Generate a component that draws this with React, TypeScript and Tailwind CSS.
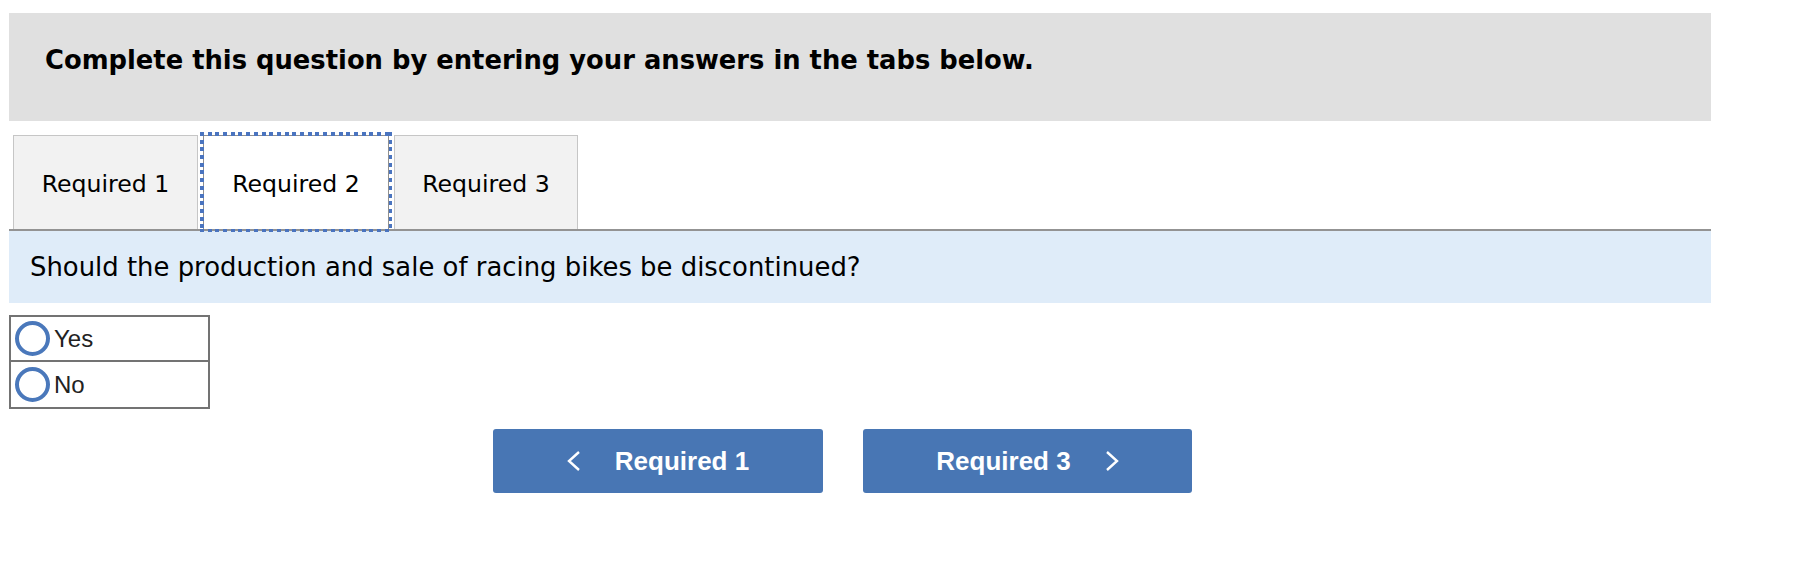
import React from "react";

const verdana = { fontFamily: '"DejaVu Sans", Verdana, sans-serif' };
const arial = { fontFamily: '"Liberation Sans", Arial, sans-serif' };

function Radio({ label, last }: { label: string; last?: boolean }) {
  return (
    <div
      className={`flex items-center h-[45px] pl-[4px] ${last ? "" : "border-b-2 border-[#737373]"}`}
    >
      <span className="w-[35px] h-[35px] rounded-full border-[4px] border-[#4a78bb] bg-white shrink-0" />
      <span className="ml-[4px] text-[24px] leading-none text-[#222]" style={arial}>
        {label}
      </span>
    </div>
  );
}

export default function App() {
  return (
    <div className="w-[1805px] h-[564px] bg-white pt-[13px]">
      <div className="ml-[9px] w-[1702px]">
        <div className="h-[108px] bg-[#e0e0e0] pt-[31px] pl-[36px]">
          <div className="text-[25.8px] leading-[32px] font-bold text-black" style={verdana}>
            Complete this question by entering your answers in the tabs below.
          </div>
        </div>

        <div className="mt-[14px] flex items-end pl-[4px] h-[94px]">
          <div
            className="w-[185px] h-[94px] pt-[4px] bg-[#f2f2f2] border border-b-0 border-[#c6c6c6] flex items-center justify-center text-[23.6px] text-black"
            style={verdana}
          >
            Required 1
          </div>
          <div
            className="relative ml-[5px] w-[186px] h-[94px] pt-[4px] bg-white border border-b-0 border-[#8f8f8f] flex items-center justify-center text-[23.6px] text-black"
            style={verdana}
          >
            Required 2
            <div className="absolute -top-[4px] -left-[4px] -right-[4px] -bottom-[3px] pointer-events-none">
              <div className="absolute top-0 left-0 right-0 h-[3.5px] bg-[repeating-linear-gradient(90deg,#4a74bf_0_4px,transparent_4px_7.7px)]" />
              <div className="absolute bottom-0 left-0 right-0 h-[3.5px] bg-[repeating-linear-gradient(90deg,#4a74bf_0_4px,transparent_4px_7.7px)]" />
              <div className="absolute top-0 bottom-0 left-0 w-[3.5px] bg-[repeating-linear-gradient(180deg,#4a74bf_0_4px,transparent_4px_7.7px)]" />
              <div className="absolute top-0 bottom-0 right-0 w-[3.5px] bg-[repeating-linear-gradient(180deg,#4a74bf_0_4px,transparent_4px_7.7px)]" />
            </div>
          </div>
          <div
            className="ml-[5px] w-[184px] h-[94px] pt-[4px] bg-[#f2f2f2] border border-b-0 border-[#c6c6c6] flex items-center justify-center text-[23.6px] text-black"
            style={verdana}
          >
            Required 3
          </div>
        </div>
        <div className="h-[2px] bg-[#939393]" />
        <div className="h-[72px] bg-[#dfecf9] flex items-center pl-[21px]">
          <span className="text-[25.9px] text-black" style={verdana}>
            Should the production and sale of racing bikes be discontinued?
          </span>
        </div>

        <div className="mt-[12px] w-[201px] border-2 border-[#737373]">
          <Radio label="Yes" />
          <Radio label="No" last />
        </div>

        <div className="mt-[20px] flex gap-[40px] pl-[484px]">
          <button
            className="w-[330px] h-[64px] rounded-[3px] bg-[#4876b4] text-white flex items-center justify-center"
            style={arial}
          >
            <svg width="14" height="20" viewBox="0 0 14 20" fill="none">
              <path d="M12 1 L2 10 L12 19" stroke="white" strokeWidth="2.4" />
            </svg>
            <span className="ml-[34px] text-[26px] font-bold leading-none">Required 1</span>
          </button>
          <button
            className="w-[329px] h-[64px] rounded-[3px] bg-[#4876b4] text-white flex items-center justify-center"
            style={arial}
          >
            <span className="mr-[34px] text-[26px] font-bold leading-none">Required 3</span>
            <svg width="14" height="20" viewBox="0 0 14 20" fill="none">
              <path d="M2 1 L12 10 L2 19" stroke="white" strokeWidth="2.4" />
            </svg>
          </button>
        </div>
      </div>
    </div>
  );
}
